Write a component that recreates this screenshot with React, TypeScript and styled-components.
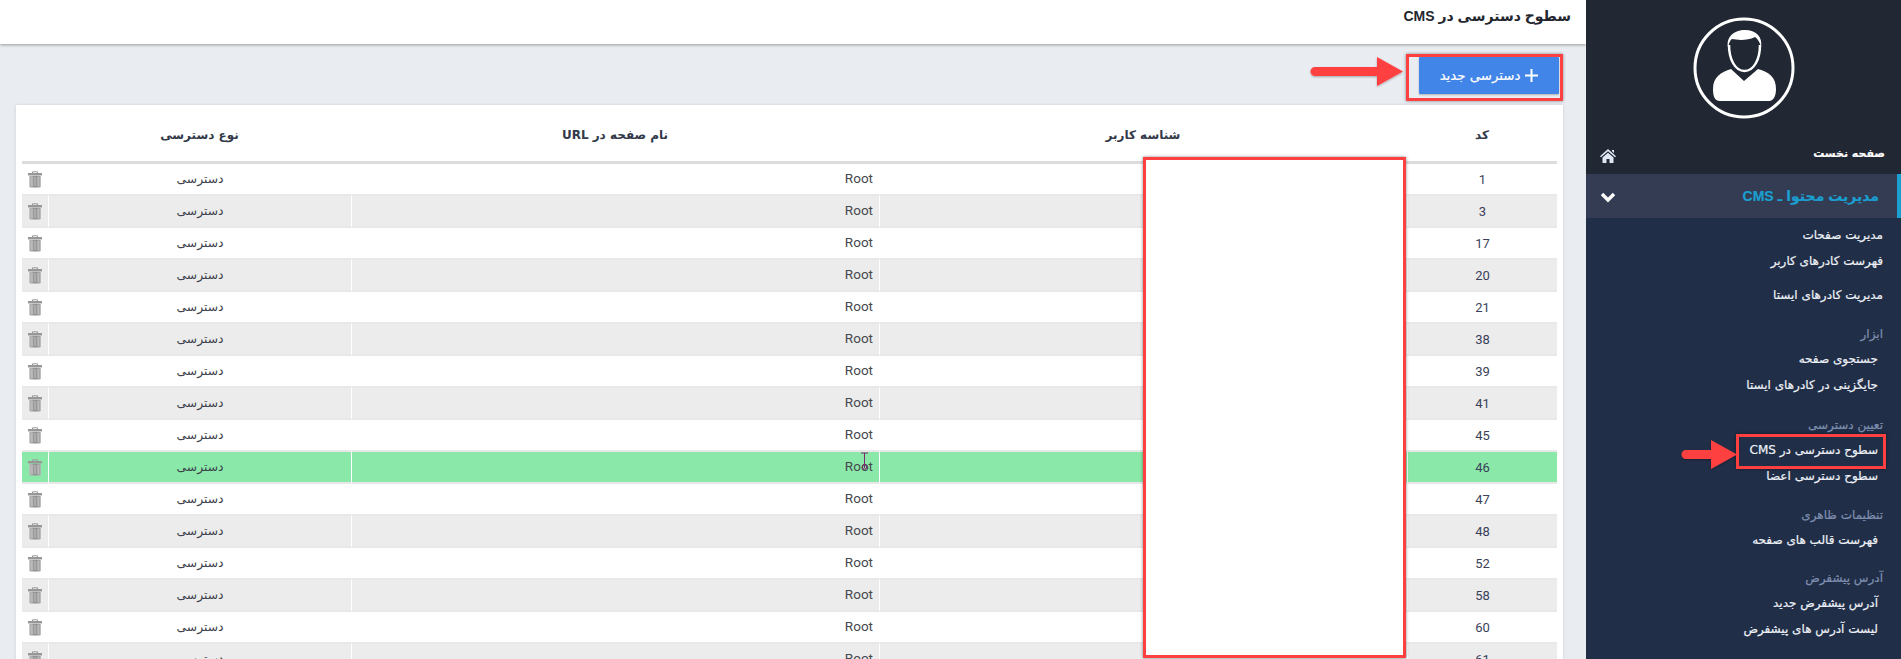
import React from "react";
import styled, { createGlobalStyle } from "styled-components";

const Global = createGlobalStyle`
  html, body { margin: 0; padding: 0; background: #e9ecf1; }
  body { font-family: Roboto, "DejaVu Sans", sans-serif; }
  * { box-sizing: border-box; }
`;

const Page = styled.div`
  position: relative;
  display: flex;
  width: 1901px;
  height: 659px;
  overflow: hidden;
`;
const Main = styled.main`
  width: 1586px;
  flex: none;
  display: flex;
  flex-direction: column;
`;
const Header = styled.header`
  height: 44px;
  flex: none;
  background: #fff;
  box-shadow: 0 1px 3px rgba(0, 0, 0, 0.35);
  direction: rtl;
  padding: 6px 15px 0 0;
`;
const Title = styled.h1`
  margin: 0;
  font: 700 14px/20px "Liberation Sans", "DejaVu Sans", sans-serif;
  color: #23262e;
`;
const Toolbar = styled.div`
  height: 61px;
  flex: none;
  display: flex;
  justify-content: flex-end;
  padding: 13px 27px 0 0;
`;
const AddButton = styled.button`
  width: 140px;
  height: 37px;
  border: 0;
  border-radius: 1px;
  background: #4285e8;
  color: #fff;
  display: flex;
  align-items: center;
  justify-content: center;
  gap: 5px;
  direction: rtl;
  font: 400 13.3px/1 "DejaVu Sans", sans-serif;
  -webkit-text-stroke: 0.2px #fff;
  padding: 0;
  box-shadow: 0 1px 2px rgba(0, 0, 0, 0.25);
`;
const Card = styled.section`
  margin: 0 23px 0 16px;
  flex: 1;
  background: #fff;
  padding: 0 6px;
  box-shadow: 0 0 3px rgba(0, 0, 0, 0.12);
`;
const Table = styled.table`
  width: 100%;
  table-layout: fixed;
  border-collapse: separate;
  border-spacing: 0;
`;
const HeadCell = styled.th`
  height: 59px;
  padding: 3px 0 0;
  border-bottom: 3px solid #dcdcdc;
  text-align: center;
  vertical-align: middle;
  direction: rtl;
  color: #333a4a;
  font: 700 12px/1 "DejaVu Sans", sans-serif;
`;
const Row = styled.tr<{ $tone: "plain" | "alt" | "hit" }>`
  background: ${(p) => (p.$tone === "hit" ? "#8ae9a9" : p.$tone === "alt" ? "#ececec" : "#fff")};
`;
const Cell = styled.td`
  height: 32px;
  padding: 0 6px;
  border-bottom: 2px solid #e8e8e8;
  border-left: 1px solid #fff;
  text-align: center;
  color: #3c414c;
  font: 400 12.3px/1 "DejaVu Sans", sans-serif;
  vertical-align: middle;
`;
const RootCell = styled(Cell)`
  text-align: right;
  color: #45494f;
  font: 400 13.5px/1 Roboto, sans-serif;
`;
const CodeCell = styled(Cell)`
  color: #3a3f5a;
  font: 400 13px/1 Roboto, sans-serif;
`;
const ActionCell = styled(Cell)`
  padding: 1px 1px 0 0;
  line-height: 0;
  border-left: 0;
`;
const Side = styled.aside`
  width: 315px;
  flex: none;
  background: #212e47;
  display: flex;
  flex-direction: column;
  direction: rtl;
  color: #eef2f8;
  font: 400 12px/26px "DejaVu Sans", sans-serif;
  -webkit-text-stroke: 0.2px currentColor;
`;
const SideTop = styled.div`
  height: 174px;
  flex: none;
  background: #212733;
  display: flex;
  flex-direction: column;
`;
const AvatarWrap = styled.div`
  height: 130px;
  display: flex;
  justify-content: center;
  padding: 17px 0 0 1px;
  direction: ltr;
`;
const HomeRow = styled.div`
  height: 44px;
  display: flex;
  justify-content: space-between;
  padding: 11px 16px 0 14px;
  color: #fff;
  font-weight: 700;
  font-size: 11px;
  line-height: 26px;
`;
const HomeGlyph = styled.svg`
  margin-top: 8px;
`;
const ActiveRow = styled.div`
  height: 44px;
  flex: none;
  background: #333c52;
  border-right: 4px solid #1a9fd0;
  display: flex;
  align-items: center;
  justify-content: space-between;
  padding: 0 18px 0 14px;
  color: #1a9fd0;
  font: 700 14px/1 "Liberation Sans", "DejaVu Sans", sans-serif;
`;
const ChevronGlyph = styled.svg`
  margin-top: 3px;
`;
const SubMenu = styled.nav`
  display: flex;
  flex-direction: column;
  padding-top: 4px;
`;
const Item = styled.div<{ $indent?: number; $gap?: number }>`
  height: 26px;
  padding-right: ${(p) => p.$indent ?? 23}px;
  margin-top: ${(p) => p.$gap ?? 0}px;
  white-space: nowrap;
`;
const Group = styled.div<{ $gap?: number }>`
  height: 24px;
  line-height: 24px;
  padding-right: 18px;
  margin-top: ${(p) => p.$gap ?? 0}px;
  color: #7f8fb0;
  white-space: nowrap;
`;
const Frame = styled.div<{ $x: number; $y: number; $w: number; $h: number }>`
  position: absolute;
  left: ${(p) => p.$x}px;
  top: ${(p) => p.$y}px;
  width: ${(p) => p.$w}px;
  height: ${(p) => p.$h}px;
  border: 3px solid #ff4040;
  box-shadow: 0 0 3px rgba(0, 0, 0, 0.45);
`;
const Mask = styled(Frame)`
  background: #fff;
`;
const Overlay = styled.svg<{ $x: number; $y: number }>`
  position: absolute;
  left: ${(p) => p.$x}px;
  top: ${(p) => p.$y}px;
`;
const PlusGlyph = styled.svg`
  width: 13px;
  height: 13px;
  flex: none;
`;

const Arrow = ({ x, y, length }: { x: number; y: number; length: number }) => (
  <Overlay $x={x} $y={y} width={length + 4} height="36" viewBox={`0 0 ${length + 4} 36`}>
    <defs>
      <filter id={`s${x}`} x="-10%" y="-20%" width="120%" height="150%">
        <feDropShadow dx="0" dy="1" stdDeviation="1" floodOpacity="0.3" />
      </filter>
    </defs>
    <path
      filter={`url(#s${x})`}
      d={`M6 12h${length - 32}V2L${length} 16.500 ${length - 26} 31v-10H6a4.500 4.500 0 0 1 0-9z`}
      fill="#ff4040"
    />
  </Overlay>
);

const Trash = ({ id }: { id: string }) => (
  <svg width="14" height="17" viewBox="0 0 14 17">
    <defs>
      <linearGradient id={id} x1="0" x2="1" y1="0" y2="0">
        <stop offset="0" stopColor="#bdbdbd" />
        <stop offset="0.5" stopColor="#8c8c8c" />
        <stop offset="1" stopColor="#b0b0b0" />
      </linearGradient>
    </defs>
    <path d="M4.500 2V.8h5V2" fill="none" stroke="#999" strokeWidth="1" />
    <rect x="0" y="2" width="14" height="2.400" fill="#979797" />
    <path d="M1.200 4.800h11.600V15.500a1 1 0 0 1-1 1H2.200a1 1 0 0 1-1-1z" fill={`url(#${id})`} />
    <path d="M4 6v9M7 6v9M10 6v9" stroke="#d4d4d4" strokeWidth="0.8" />
  </svg>
);

const Avatar = () => (
  <svg width="102" height="102" viewBox="0 0 102 102">
    <circle cx="51" cy="51" r="49" fill="none" stroke="#fff" strokeWidth="3" />
    <path d="M36 28c0 14 6 26 15.500 26S67 42 67 28" fill="none" stroke="#fff" strokeWidth="2.500" />
    <path d="M35 30c-2-10 6-17 17-17s18 7 16 17c-1-4-3-8-6-10-8 4-18 3-23 2-2 1-3 5-4 8z" fill="#fff" />
    <path d="M38 52l13 12 14-12c11 3 18 8 18 20 0 8-3 12-7 12H27c-5 0-7-4-7-12 0-12 8-17 18-20z" fill="#fff" />
  </svg>
);

const codes = [1, 3, 17, 20, 21, 38, 39, 41, 45, 46, 47, 48, 52, 58, 60, 61];

export default function App() {
  return (
    <Page>
      <Global />
      <Main>
        <Header>
          <Title>سطوح دسترسی در CMS</Title>
        </Header>
        <Toolbar>
          <AddButton>
            <PlusGlyph viewBox="0 0 13 13">
              <path d="M6.500 0v13M0 6.500h13" stroke="#fff" strokeWidth="2" />
            </PlusGlyph>
            دسترسی جدید
          </AddButton>
        </Toolbar>
        <Card>
          <Table>
            <colgroup>
              <col width="26" />
              <col width="303" />
              <col width="528" />
              <col width="528" />
              <col width="150" />
            </colgroup>
            <thead>
              <tr>
                <HeadCell />
                <HeadCell>نوع دسترسی</HeadCell>
                <HeadCell>نام صفحه در URL</HeadCell>
                <HeadCell>شناسه کاربر</HeadCell>
                <HeadCell>کد</HeadCell>
              </tr>
            </thead>
            <tbody>
              {codes.map((c, i) => (
                <Row key={c} $tone={c === 46 ? "hit" : i % 2 ? "alt" : "plain"}>
                  <ActionCell>
                    <Trash id={`t${c}`} />
                  </ActionCell>
                  <Cell>دسترسی</Cell>
                  <RootCell>Root</RootCell>
                  <Cell />
                  <CodeCell>{c}</CodeCell>
                </Row>
              ))}
            </tbody>
          </Table>
        </Card>
      </Main>
      <Side>
        <SideTop>
          <AvatarWrap>
            <Avatar />
          </AvatarWrap>
          <HomeRow>
            صفحه نخست
            <HomeGlyph width="16" height="14" viewBox="0 0 16 14">
              <path d="M8 0l8 7.200-1 1L8 2.200 1 8.200l-1-1zM12 1h2v3l-2-1.700zM2.500 8.500L8 3.800l5.500 4.700V14H9.500v-4h-3v4h-4z" fill="#dfe8f5" />
            </HomeGlyph>
          </HomeRow>
        </SideTop>
        <ActiveRow>
          مدیریت محتوا ـ CMS
          <ChevronGlyph width="16" height="11" viewBox="0 0 16 11">
            <path d="M2 2l6 6 6-6" fill="none" stroke="#fff" strokeWidth="3.400" />
          </ChevronGlyph>
        </ActiveRow>
        <SubMenu>
          <Item $indent={18}>مدیریت صفحات</Item>
          <Item $indent={18}>فهرست کادرهای کاربر</Item>
          <Item $indent={18} $gap={8}>مدیریت کادرهای ایستا</Item>
          <Group $gap={14}>ابزار</Group>
          <Item>جستجوی صفحه</Item>
          <Item>جایگزینی در کادرهای ایستا</Item>
          <Group $gap={15}>تعیین دسترسی</Group>
          <Item>سطوح دسترسی در CMS</Item>
          <Item>سطوح دسترسی اعضا</Item>
          <Group $gap={14}>تنظیمات ظاهری</Group>
          <Item>فهرست قالب های صفحه</Item>
          <Group $gap={13}>آدرس پیشفرض</Group>
          <Item>آدرس پیشفرض جدید</Item>
          <Item>لیست آدرس های پیشفرض</Item>
        </SubMenu>
      </Side>
      <Frame $x={1406} $y={54} $w={157} $h={47} />
      <Arrow x={1309} y={55} length={94} />
      <Mask $x={1143} $y={157} $w={263} $h={501} />
      <Frame $x={1736} $y={434} $w={150} $h={35} />
      <Arrow x={1680} y={438} length={57} />
      <Overlay $x={860} $y={452} width="9" height="18" viewBox="0 0 9 18">
        <path d="M1 1h7M4.500 1v15" stroke="#7a2a6a" strokeWidth="1" fill="none" />
        <circle cx="4.500" cy="15" r="2.200" fill="none" stroke="#7a2a6a" strokeWidth="1" />
      </Overlay>
    </Page>
  );
}
